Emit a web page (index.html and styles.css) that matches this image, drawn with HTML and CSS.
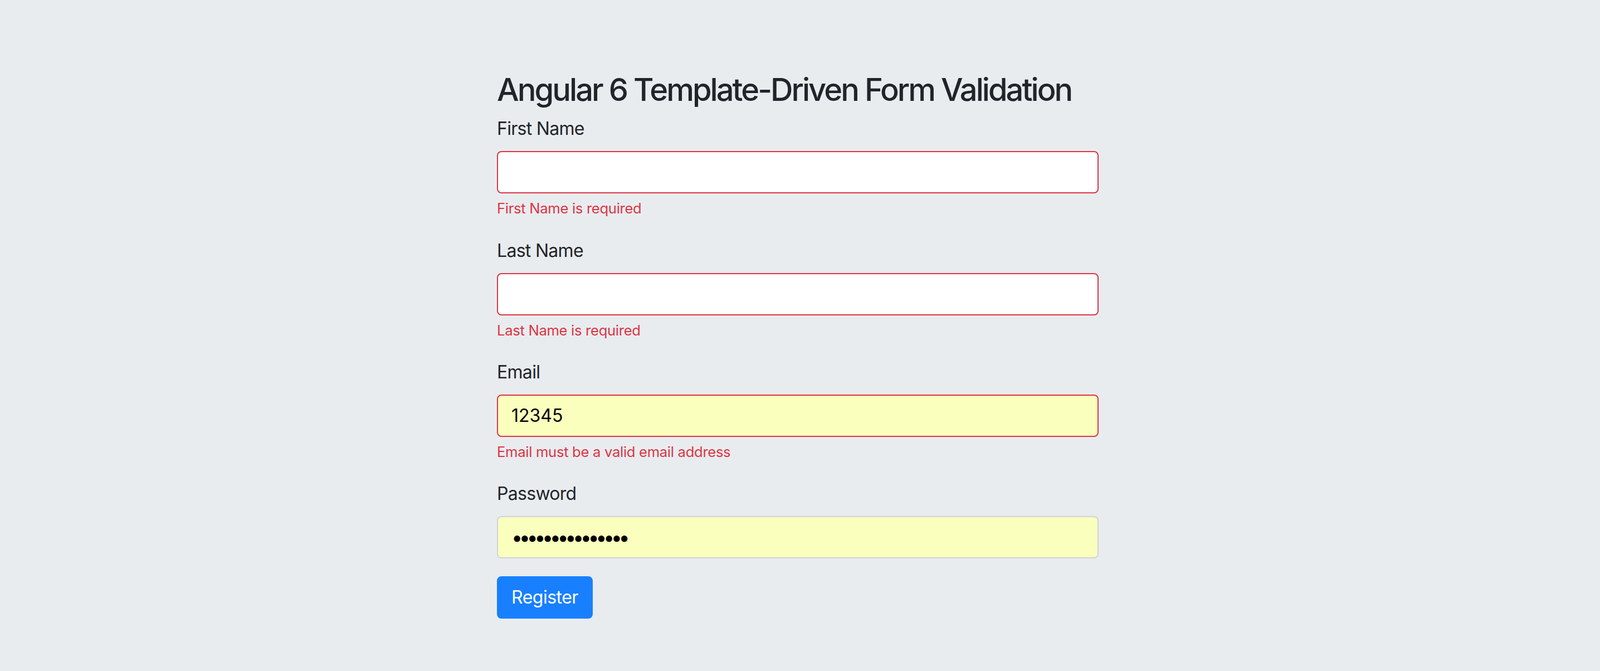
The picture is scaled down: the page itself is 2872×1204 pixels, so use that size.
FILE: index.html
```html
<!DOCTYPE html>
<html lang="en">
<head>
<meta charset="utf-8">
<title>Angular 6 Template-Driven Form Validation</title>
<link rel="stylesheet" href="styles.css">
</head>
<body>
<div class="jumbotron">
  <div class="col">
    <h3 class="title">Angular 6 Template-Driven Form Validation</h3>
    <form class="form" novalidate>
      <div class="form-group">
        <label class="label" for="firstName">First Name</label>
        <input class="form-control is-invalid" type="text" id="firstName" name="firstName" value="">
        <div class="invalid-feedback">First Name is required</div>
      </div>
      <div class="form-group">
        <label class="label" for="lastName">Last Name</label>
        <input class="form-control is-invalid" type="text" id="lastName" name="lastName" value="">
        <div class="invalid-feedback">Last Name is required</div>
      </div>
      <div class="form-group">
        <label class="label" for="email">Email</label>
        <input class="form-control is-invalid autofilled" type="text" id="email" name="email" value="12345">
        <div class="invalid-feedback">Email must be a valid email address</div>
      </div>
      <div class="form-group">
        <label class="label" for="password">Password</label>
        <input class="form-control autofilled pw" type="password" id="password" name="password" value="abcdefghijklmno">
      </div>
      <div class="form-group">
        <button class="btn" type="button">Register</button>
      </div>
    </form>
  </div>
</div>
</body>
</html>
```
FILE: styles.css
```css
html, body {
  margin: 0;
  padding: 0;
  background: #e9ecef;
}
body {
  font-family: Inter, "Noto Sans", "Liberation Sans", sans-serif;
  font-size: 32px;
  line-height: 1.5;
  color: #212529;
}
.jumbotron {
  background: #e9ecef;
  padding: 128px 8px 128px 0;
}
.col {
  width: 1080px;
  margin: 0 auto;
}
.title {
  margin: 0 0 12px;
  font-size: 56px;
  line-height: 1.2;
  font-weight: 500;
  letter-spacing: -2.95px;
  white-space: nowrap;
  color: #212529;
}
.form {
  margin: 0;
}
.form-group {
  margin-bottom: 32px;
}
.label {
  display: inline-block;
  margin-bottom: 16px;
  font-size: 32px;
  line-height: 1.5;
  letter-spacing: -0.7px;
}
.form-control {
  display: block;
  box-sizing: border-box;
  width: 100%;
  height: 76px;
  margin: 0;
  padding: 12px 24px;
  font-family: Inter, "Noto Sans", "Liberation Sans", sans-serif;
  font-size: 32px;
  line-height: 1.5;
  color: #000;
  background: #fff;
  border: 2px solid #ced4da;
  border-radius: 8px;
  outline: none;
}
.form-control.is-invalid {
  border-color: #dc3545;
}
.form-control.autofilled {
  background: #faffbd;
}
.form-control.pw {
  font-size: 36px;
  line-height: 48px;
  letter-spacing: -6.5px;
}
.invalid-feedback {
  margin-top: 8px;
  font-size: 25.6px;
  line-height: 1.5;
  letter-spacing: -0.3px;
  color: #dc3545;
}
.btn {
  display: inline-block;
  margin: 0;
  padding: 12px 24px;
  font-family: Inter, "Noto Sans", "Liberation Sans", sans-serif;
  font-size: 32px;
  line-height: 1.5;
  font-weight: 400;
  letter-spacing: -0.5px;
  color: #fff;
  background: #1880ff;
  border: 2px solid #1880ff;
  border-radius: 8px;
}
```
